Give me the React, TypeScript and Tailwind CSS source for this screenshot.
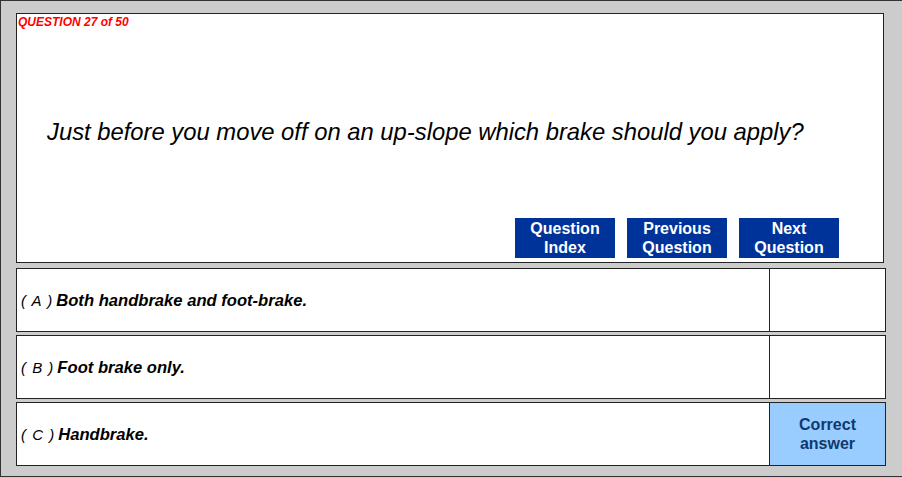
export default function App() {
  const options = [
    { letter: "A", text: "Both handbrake and foot-brake.", correct: false },
    { letter: "B", text: "Foot brake only.", correct: false },
    { letter: "C", text: "Handbrake.", correct: true },
  ];

  return (
    <div className="w-[902px] h-[478px] bg-[#cccccc] font-['Liberation_Sans',Arial,sans-serif]">
      <div className="h-[477px] border-t border-l border-b border-[#333333] pl-[15px] pt-[12px]">
        {/* question panel */}
        <div className="relative w-[868px] h-[250px] bg-white border border-[#222222]">
          <div className="absolute left-[1px] top-[1px] text-[12px] leading-[14px] font-bold italic text-[#ff0000]">
            QUESTION 27 of 50
          </div>
          <div className="pl-[30px] pt-[104px] text-[23.8px] leading-[28px] italic text-black">
            Just before you move off on an up-slope which brake should you apply?
          </div>
          <div className="absolute left-[498px] top-[204px] flex gap-[12px]">
            <NavButton top="Question" bottom="Index" />
            <NavButton top="Previous" bottom="Question" />
            <NavButton top="Next" bottom="Question" />
          </div>
        </div>

        {/* answers */}
        <div className="mt-[5px] flex flex-col gap-[3px] w-[870px]">
          {options.map((o) => (
            <div key={o.letter} className="flex h-[64px] bg-white border border-[#222222]">
              <div className="w-[752px] flex items-center pl-[4px] pt-[2px] italic text-black">
                <span className="text-[15px] font-normal mr-[3px] tracking-[1px]">( {o.letter} )</span>
                <span className="text-[16.6px] font-bold">{o.text}</span>
              </div>
              <div
                className={
                  o.correct
                    ? "flex-1 border-l border-[#222222] bg-[#99ccff] flex flex-col items-center justify-center text-[16px] leading-[19px] font-bold text-[#0f3a6e]"
                    : "flex-1 border-l border-[#222222]"
                }
              >
                {o.correct && (
                  <>
                    <span>Correct</span>
                    <span>answer</span>
                  </>
                )}
              </div>
            </div>
          ))}
        </div>
      </div>
    </div>
  );
}

function NavButton({ top, bottom }: { top: string; bottom: string }) {
  return (
    <div className="w-[100px] h-[40px] bg-[#003399] flex flex-col items-center justify-center text-white font-bold text-[16px] leading-[19px]">
      <span>{top}</span>
      <span>{bottom}</span>
    </div>
  );
}
